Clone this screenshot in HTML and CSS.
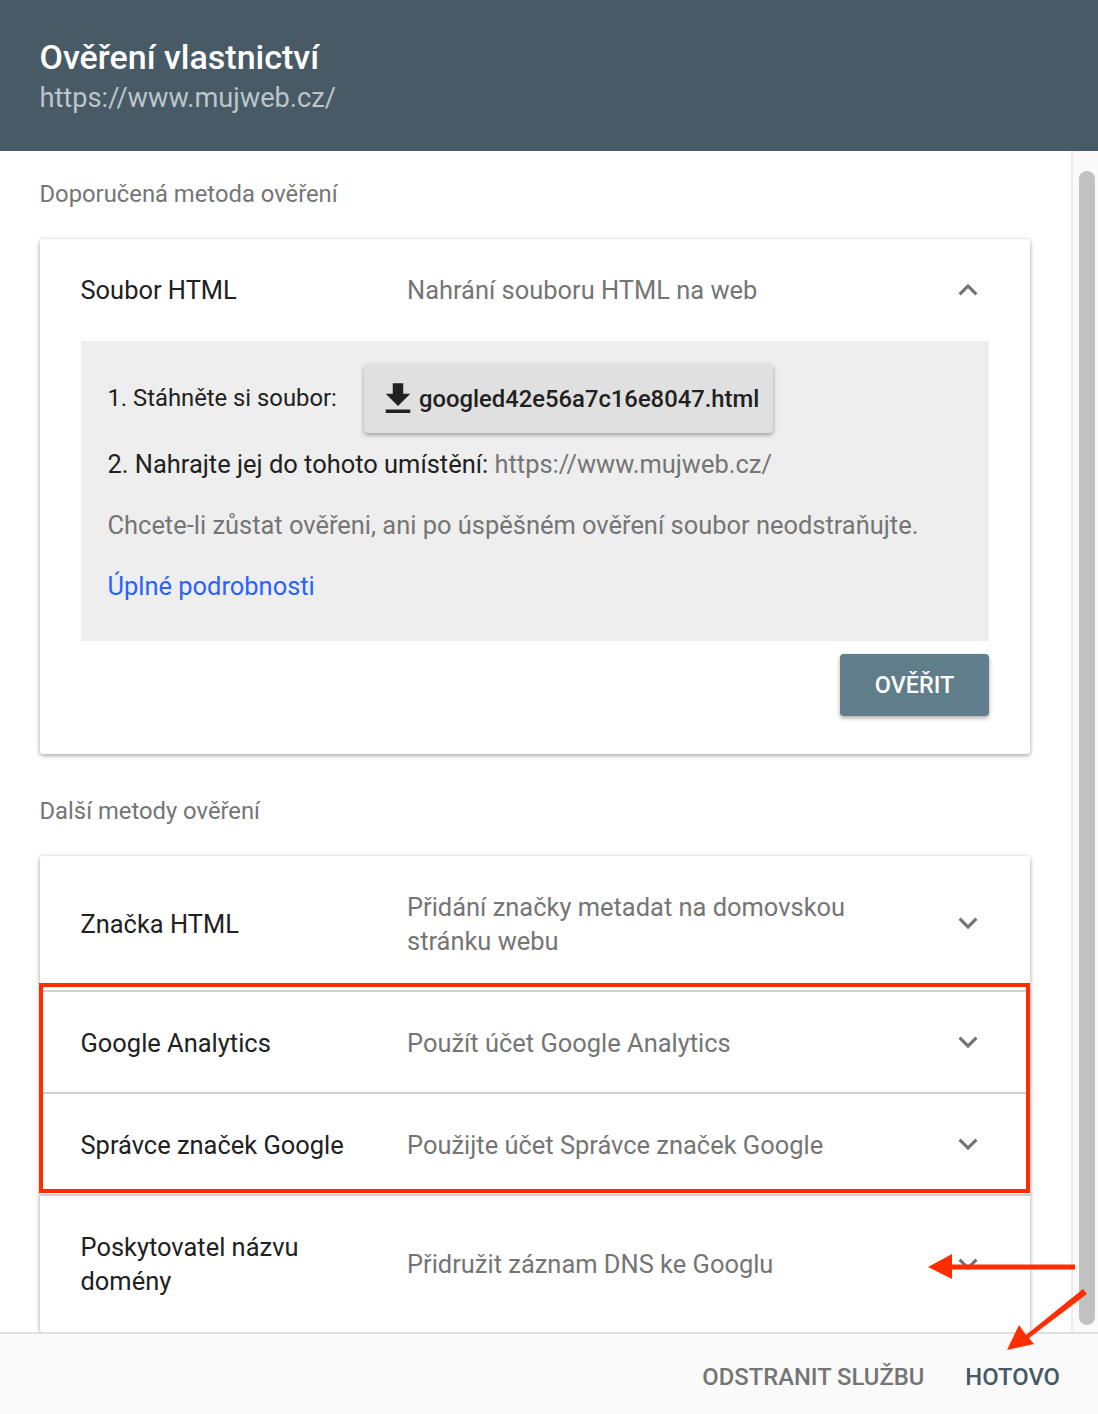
FILE: index.html
```html
<!DOCTYPE html>
<html lang="cs">
<head>
<meta charset="utf-8">
<title>Ověření vlastnictví</title>
<link rel="stylesheet" href="styles.css">
</head>
<body>
<div class="dialog">
  <header class="head">
    <h1 class="head-title">Ověření vlastnictví</h1>
    <div class="head-url">https://www.mujweb.cz/</div>
  </header>
  <div class="middle">
    <main class="content">
      <div class="section-label first">Doporučená metoda ověření</div>
      <section class="card">
        <div class="row row-open">
          <div class="row-title">Soubor HTML</div>
          <div class="row-desc">Nahrání souboru HTML na web</div>
          <svg class="chev" viewBox="0 0 24 24"><path d="M7.41 15.41L12 10.83l4.59 4.58L18 14l-6-6-6 6z"/></svg>
        </div>
        <div class="panel">
          <div class="step-one">
            <span class="step-text">1. Stáhněte si soubor:</span>
            <div class="dl-btn">
              <svg class="dl-icon" viewBox="0 0 24 24"><path d="M19 9h-4V3H9v6H5l7 7 7-7zM5 18v2h14v-2H5z"/></svg>
              <span>googled42e56a7c16e8047.html</span>
            </div>
          </div>
          <div class="step-two">2. Nahrajte jej do tohoto umístění: <span class="muted">https://www.mujweb.cz/</span></div>
          <div class="step-note muted">Chcete-li zůstat ověřeni, ani po úspěšném ověření soubor neodstraňujte.</div>
          <div class="step-link">Úplné podrobnosti</div>
        </div>
        <div class="verify-wrap"><div class="verify">OVĚŘIT</div></div>
      </section>
      <div class="section-label second">Další metody ověření</div>
      <section class="card">
        <div class="row row-tall">
          <div class="row-title">Značka HTML</div>
          <div class="row-desc">Přidání značky metadat na domovskou<br>stránku webu</div>
          <svg class="chev" viewBox="0 0 24 24"><path d="M7.41 8.59L12 13.17l4.59-4.58L18 10l-6 6-6-6z"/></svg>
        </div>
        <div class="row row-line">
          <div class="row-title">Google Analytics</div>
          <div class="row-desc">Použít účet Google Analytics</div>
          <svg class="chev" viewBox="0 0 24 24"><path d="M7.41 8.59L12 13.17l4.59-4.58L18 10l-6 6-6-6z"/></svg>
        </div>
        <div class="row row-line">
          <div class="row-title">Správce značek Google</div>
          <div class="row-desc">Použijte účet Správce značek Google</div>
          <svg class="chev" viewBox="0 0 24 24"><path d="M7.41 8.59L12 13.17l4.59-4.58L18 10l-6 6-6-6z"/></svg>
        </div>
        <div class="row row-dns">
          <div class="row-title">Poskytovatel názvu<br>domény</div>
          <div class="row-desc">Přidružit záznam DNS ke Googlu</div>
          <svg class="chev" viewBox="0 0 24 24"><path d="M7.41 8.59L12 13.17l4.59-4.58L18 10l-6 6-6-6z"/></svg>
        </div>
      </section>
    </main>
    <div class="track"><div class="thumb"></div></div>
  </div>
  <footer class="foot">
    <span class="foot-btn">ODSTRANIT SLUŽBU</span>
    <span class="foot-btn done">HOTOVO</span>
  </footer>
  <div class="highlight"></div>
  <svg class="arrows" viewBox="0 0 1098 1414">
    <path class="arrow" d="M928 1267L952 1254V1264.500H1075V1269.500H952V1279Z"/>
    <path class="arrow" d="M1007 1350L1019 1325L1026 1335L1083 1289L1087 1294L1029 1338L1034 1344Z"/>
  </svg>
</div>
</body>
</html>
```

FILE: styles.css
```css
* { box-sizing: border-box; }
html, body { margin: 0; padding: 0; height: 100%; }
body { font-family: Roboto, "Liberation Sans", sans-serif; background: #fff; overflow: hidden; }
.dialog { position: relative; width: 1098px; height: 1414px; display: flex; flex-direction: column; overflow: hidden; }

.head { height: 151px; flex: none; background: #475a66; padding: 38px 39.5px 0; }
.head-title { margin: 0; font-size: 34px; line-height: 38px; font-weight: 500; color: #fff; }
.head-url { font-size: 27.2px; line-height: 32px; margin-top: 6px; color: #bcc5ca; }

.middle { flex: 1; min-height: 0; display: flex; }
.content { flex: 1; min-width: 0; overflow: hidden; padding: 0 41px 0 40px; }
.track { flex: none; width: 27px; background: #fafafa; border-left: 2px solid #ebebeb; padding: 20px 3px 7px 6px; }
.thumb { height: 100%; background: #c1c1c1; border-radius: 8px; }

.section-label { font-size: 23.8px; line-height: 28px; color: #757575; margin-left: -0.5px; }
.section-label.first { padding-top: 29px; margin-bottom: 31px; }
.section-label.second { margin-top: 43px; margin-bottom: 31px; }

.card { background: #fff; border-radius: 3px; box-shadow: 0 2px 4px rgba(0,0,0,.28), 0 0 5px rgba(0,0,0,.12); }

.row { display: flex; align-items: center; padding: 0 43px 0 40.5px; font-size: 25.45px; line-height: 34px; }
.row-open { height: 102px; }
.row-tall { height: 134px; padding-top: 1px; }
.row-line { height: 102px; border-top: 2px solid #d0d0d0; padding-top: 2px; }
.row-dns { height: 138px; border-top: 2px solid #d0d0d0; }
.row-title { width: 326.5px; flex: none; color: #212121; }
.row-desc { flex: 1; color: #757575; }
.chev { width: 38px; height: 38px; flex: none; fill: #757575; }
.row-tall .chev { margin-bottom: 2px; }
.row-line .chev { margin-bottom: 3px; }

.panel { margin: 0 41px; height: 300px; background: #eee; padding: 23px 26.5px 0; font-size: 25.45px; color: #212121; }
.step-one { display: flex; align-items: center; height: 69px; font-size: 23.8px; }
.step-text { width: 256.5px; flex: none; margin-bottom: 2px; }
.dl-btn { width: 409px; height: 69px; display: flex; align-items: center; gap: 0; padding-left: 13px; background: #e0e0e0; border-radius: 4px; box-shadow: 0 2px 4px rgba(0,0,0,.35); font-weight: 500; white-space: nowrap; }
.dl-icon { width: 42px; height: 42px; flex: none; fill: #212121; }
.step-two { line-height: 34px; margin-top: 14px; }
.step-note { line-height: 34px; margin-top: 27px; white-space: nowrap; }
.step-link { line-height: 34px; margin-top: 27px; color: #2962ff; }
.muted { color: #757575; }

.verify-wrap { display: flex; justify-content: flex-end; padding: 13px 41px 38px; }
.verify { width: 149px; height: 62px; display: flex; align-items: center; justify-content: center; background: #607d8b; color: #fff; font-size: 23.4px; font-weight: 500; border-radius: 4px; box-shadow: 0 2px 4px rgba(0,0,0,.35); }

.foot { flex: none; height: 82px; background: #fafafa; border-top: 2px solid #e0e0e0; display: flex; justify-content: flex-end; align-items: center; gap: 41px; padding: 6px 38px 0 0; position: relative; }
.foot-btn { font-size: 23.8px; font-weight: 500; color: #757575; }
.foot-btn.done { color: #455a64; }

.highlight { position: absolute; left: 39px; top: 983px; width: 991px; height: 210px; border: 4px solid #ff2d00; }
.arrows { position: absolute; left: 0; top: 0; width: 1098px; height: 1414px; pointer-events: none; }
.arrow { fill: #ff2d00; }
```
